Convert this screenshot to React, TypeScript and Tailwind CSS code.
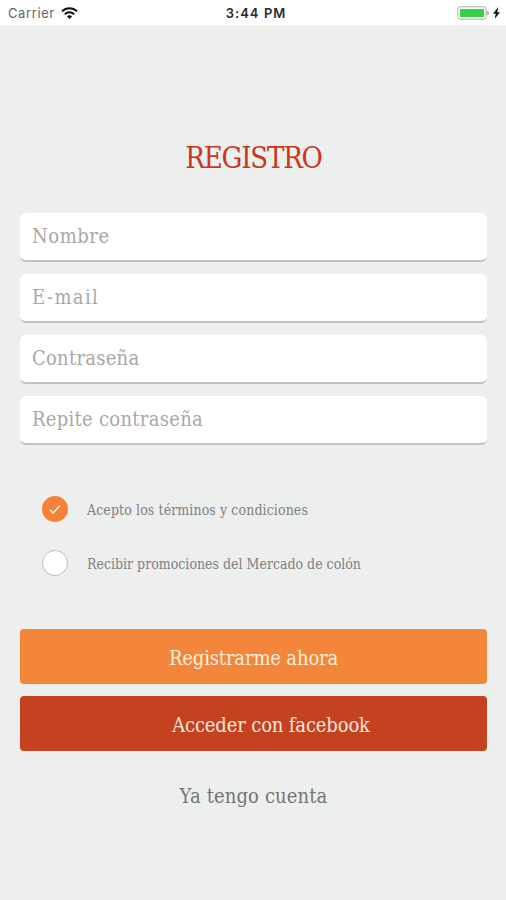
import React, { useState } from 'react';

interface FieldProps {
  label: string;
  type?: string;
  className?: string;
}

const Field: React.FC<FieldProps> = ({ label, type = 'text', className = '' }) => (
  <input
    type={type}
    placeholder={label}
    aria-label={label}
    className={`block h-[49px] w-full rounded-md border-b-2 border-[#bfc0bf] bg-white px-3 pb-0.5 text-[20px] text-[#777] outline-none placeholder:text-[#a8a8a8] ${className}`}
  />
);

interface OptionProps {
  label: string;
  checked: boolean;
  onToggle: () => void;
  className?: string;
}

const Option: React.FC<OptionProps> = ({ label, checked, onToggle, className = '' }) => (
  <button type="button" role="checkbox" aria-checked={checked} onClick={onToggle} className="flex h-[26px] items-center text-left">
    <span
      className={`flex h-[26px] w-[26px] items-center justify-center rounded-full ${
        checked ? 'bg-[#f58238]' : 'border border-[#bebebe] bg-white'
      }`}
    >
      {checked && (
        <svg className="h-3 w-3" viewBox="0 0 12 12" fill="none" stroke="white" strokeWidth="1.3">
          <path d="M0.8 6.8 4 10 11 2.4" />
        </svg>
      )}
    </span>
    <span className={`ml-[19px] whitespace-nowrap pt-0.5 text-[14px] text-[#808080] ${className}`}>{label}</span>
  </button>
);

const StatusBar = () => (
  <header className="flex h-[25px] items-center justify-between bg-white pl-2 pr-1.5 font-['Inter',sans-serif] text-[13px] text-[#333]">
    <div className="flex w-40 items-center gap-1.5">
      <span className="pt-0.5 tracking-[0.6px] text-[#666]">Carrier</span>
      <svg className="h-3 w-[17px]" viewBox="0 0 17 12" fill="none" stroke="#111" strokeWidth="2">
        <path d="M1 4.3C5.2.2 11.8.2 16 4.3M3.8 7.3c2.7-2.6 6.7-2.6 9.4 0" />
        <path d="M8.5 12 5.9 9.4c1.4-1.4 3.8-1.4 5.2 0Z" fill="#111" stroke="none" />
      </svg>
    </div>
    <span className="pl-1 pt-0.5 font-semibold tracking-[1.05px] text-[#2b2b2b]">3:44 PM</span>
    <div className="flex w-40 items-center justify-end gap-1">
      <svg className="h-[14px] w-8" viewBox="0 0 32 14">
        <rect x="0.8" y="0.8" width="28.4" height="12.4" rx="2.5" fill="white" stroke="#aaa" />
        <rect x="3" y="3" width="24" height="8" rx="0.6" fill="#35d146" />
        <path d="M30.3 4.5c2 1 2 4 0 5Z" fill="#999" />
      </svg>
      <svg className="h-3 w-[7px]" viewBox="0 0 7 12" fill="#111">
        <path d="M5.2 0 0 6.7h2.8L1.6 12 7 5.2H4.2Z" />
      </svg>
    </div>
  </header>
);

export default function App() {
  const [terms, setTerms] = useState(true);
  const [promos, setPromos] = useState(false);

  return (
    <div className="flex h-[900px] w-[506px] flex-col overflow-hidden bg-[#edefee] font-['DejaVu_Serif_Condensed','DejaVu_Serif',serif]">
      <StatusBar />
      <main className="flex flex-1 flex-col pl-5 pr-[19px]">
        <h1 className="mt-[114px] h-[38px] text-center text-[29px] leading-[38px] tracking-[-1.2px] text-[#cb3522]">REGISTRO</h1>

        <div className="mt-9 flex flex-col gap-3">
          <Field label="Nombre" className="tracking-[0.55px]" />
          <Field label="E-mail" type="email" className="tracking-[1.4px]" />
          <Field label="Contraseña" type="password" className="tracking-[0.25px]" />
          <Field label="Repite contraseña" type="password" className="tracking-[0.28px]" />
        </div>

        {/* Terms and promotions */}
        <div className="mt-[51px] flex flex-col gap-7 pl-[22px]">
          <Option
            label="Acepto los términos y condiciones"
            checked={terms}
            onToggle={() => setTerms(!terms)}
            className="tracking-[0.1px]"
          />
          <Option label="Recibir promociones del Mercado de colón" checked={promos} onToggle={() => setPromos(!promos)} />
        </div>

        <div className="mt-[53px] flex flex-col gap-3">
          <button type="button" className="h-[55px] rounded bg-[#f4863b] pt-0.5 text-[20px] tracking-[-0.15px] text-[#ffeedc]">
            Registrarme ahora
          </button>
          <button type="button" className="h-[55px] rounded bg-[#c54220] pl-[35px] pt-0.5 text-[20px] tracking-[-0.15px] text-[#ffe5df]">
            Acceder con facebook
          </button>
        </div>
        <button type="button" className="mt-[29px] self-center text-[20px] leading-8 tracking-[0.12px] text-[#737373]">
          Ya tengo cuenta
        </button>
      </main>
    </div>
  );
}
